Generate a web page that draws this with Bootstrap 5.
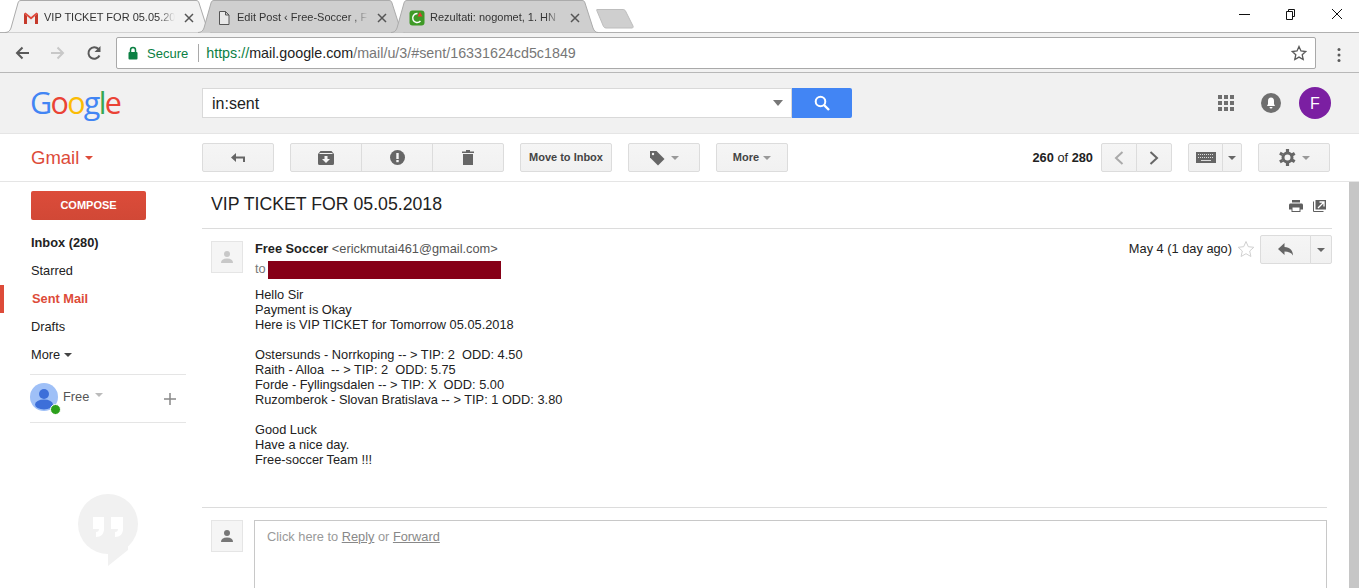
<!DOCTYPE html>
<html lang="en">
<head>
  <meta charset="UTF-8">
  <title>VIP TICKET FOR 05.05.2018</title>
  <link href="https://cdn.jsdelivr.net/npm/bootstrap@5.3.0/dist/css/bootstrap.min.css" rel="stylesheet">
  <style>
    html, body { height: 100%; }
    body { height: 588px; overflow: hidden; background: #fff; font-family: "Liberation Sans", Arial, sans-serif; font-size: 12.8px; color: #222; line-height: 15px; }

    /* chrome */
    .tabstrip { height: 33px; border-bottom: 1px solid #b0b0b0; padding-left: 5px; }
    .tabitem { position: relative; width: 207px; height: 33px; margin-right: -14px; flex: none; }
    .tabitem svg.tabshape { position: absolute; left: 0; top: 0; }
    .tabinner { position: relative; height: 32px; padding-top: 10px; font-size: 11px; color: #333; }
    .tabicon { width: 16px; height: 16px; flex: none; margin: 0 5px 0 18px; }
    .tabtitle { width: 131px; height: 15px; overflow: hidden; white-space: nowrap; -webkit-mask-image: linear-gradient(to right, #000 88%, transparent); mask-image: linear-gradient(to right, #000 88%, transparent); }
    .tabclose { margin-left: 6px; }
    .newtab { margin: 8px 0 0 12px; flex: none; }
    .winbtns { margin-left: auto; gap: 34px; padding: 8px 16px 0 0; height: 32px; }
    .toolbar { height: 40px; background: #f2f2f2; border-bottom: 1px solid #b8b8b8; padding-top: 4px; }
    .navicons { width: 116px; padding: 8px 0 0 14px; gap: 20px; height: 32px; }
    .omnibox { width: 1200px; height: 32px; background: #fff; border: 1px solid #a9a9a9; border-radius: 2px; font-size: 14.3px; padding: 0 8px 0 10px; }
    .secure { color: #0b8043; font-size: 13px; }
    .omnisep { width: 1px; height: 18px; background: #a9a9a9; margin: 0 7px 0 10px; }
    .urlhost { color: #222; }
    .urlrest { color: #777; }
    .urlscheme { color: #0b8043; }
    .menudots { padding: 0 0 0 21px; }

    /* gmail header */
    .gheader { height: 61px; background: #f1f1f1; border-bottom: 1px solid #e5e5e5; padding-left: 30px; }
    .glogo { width: 172px; margin-top: -3px; font-family: "Open Sans", "Liberation Sans", sans-serif; font-size: 30.5px; letter-spacing: -1.7px; line-height: 40px; }
    .searchbox { width: 590px; height: 30px; background: #fff; border: 1px solid #d9d9d9; font-size: 16px; padding: 0 0 0 9px; }
    .searchbtn { width: 60px; height: 30px; background: #4285f4; border-radius: 0 2px 2px 0; }
    .gright { margin-left: auto; padding-right: 28px; gap: 27px; }
    .avatarf { width: 32px; height: 32px; border-radius: 50%; background: #7b1fa2; color: #fff; font-size: 16px; margin-left: -9px; }

    /* action bar */
    .actionbar { height: 48px; border-bottom: 1px solid #e5e5e5; padding: 9px 0 0 31px; }
    .gmaillabel { width: 171px; height: 29px; color: #dd4b39; font-size: 18.5px; line-height: 29px; gap: 6px; }
    .tbtn { height: 29px; background: linear-gradient(#f5f5f5, #f1f1f1); border: 1px solid #dcdcdc; border-radius: 2px; color: #444; font-weight: bold; font-size: 11px; flex: none; }
    .tbtn-group > .tbtn { border-radius: 0; margin-left: -1px; }
    .tbtn-group > .tbtn:first-child { border-radius: 2px 0 0 2px; margin-left: 0; }
    .tbtn-group > .tbtn:last-child { border-radius: 0 2px 2px 0; }
    .tbtn-gap { gap: 6px; }
    .caretdown { width: 0; height: 0; border-left: 4px solid transparent; border-right: 4px solid transparent; border-top: 4px solid #999; display: inline-block; }
    .pager { margin: 0 8px 0 auto; line-height: 29px; color: #222; }

    /* sidebar */
    .pagebody { height: 406px; }
    .sidecol { width: 202px; flex: none; }
    .composebtn { display: block; width: 115px; height: 29px; margin: 9px 0 9px 31px; background: linear-gradient(#dc4c3a, #d14836); border-radius: 2px; color: #fff; font-weight: bold; font-size: 11px; line-height: 28px; text-align: center; }
    .sidelink { display: block; height: 28px; line-height: 28px; padding-left: 31px; color: #222; }
    .sidelink-on { color: #dd4b39; font-weight: bold; border-left: 4px solid #dd4b39; padding-left: 28px; }
    .sideuser { margin: 5px 16px 0 30px; height: 49px; border-top: 1px solid #e5e5e5; border-bottom: 1px solid #e5e5e5; padding-top: 8px; position: relative; }
    .onlinedot { position: absolute; left: 20px; top: 29px; width: 11px; height: 11px; border-radius: 50%; background: #2ca01c; border: 1px solid #fff; }
    .sidename { color: #555; padding: 6px 0 0 5px; gap: 6px; }
    .sideplus { margin: 10px 10px 0 auto; }
    .hangouts { padding: 71px 0 0 78px; }

    /* message */
    .mailcol { flex: 1 1 auto; min-width: 0; }
    .subjectrow { height: 47px; border-bottom: 1px solid #dcdcdc; margin-right: 17px; padding-left: 9px; font-size: 17.7px; line-height: 44px; color: #222; }
    .mailicons { margin-left: auto; gap: 10px; padding: 18px 6px 0 0; }
    .msgrow { padding: 6px 17px 0 9px; }
    .facebox { width: 32px; height: 32px; background: #f5f5f5; border: 1px solid #e5e5e5; flex: none; margin-top: 6px; }
    .msgmain { padding-left: 12px; min-width: 0; flex: 1 1 auto; }
    .msghead { height: 44px; }
    .sendername { font-weight: bold; color: #222; }
    .senderaddr { color: #555; }
    .torow { height: 18px; margin-top: 5px; }
    .tolabel { color: #777; padding-bottom: 3px; }
    .redacted { width: 233px; height: 18px; background: #860017; margin-left: 2px; }
    .msgdate { color: #222; margin-left: auto; padding-top: 6px; }
    .msgstar { margin: 5px 0 0 5px; }
    .mailtext { white-space: pre-wrap; color: #222; padding-top: 8px; height: 228px; }
    .divline { border-top: 1px solid #dcdcdc; margin-right: 22px; }
    .replyrow { padding: 12px 22px 0 9px; }
    .replybox { flex: 1 1 auto; height: 80px; margin-left: 11px; border: 1px solid #c8c8c8; border-bottom: 0; padding: 8px 12px; color: #999; }
    .replybox u { color: #888; }
    .fakescroll { width: 10px; flex: none; background: #c6c6c6; }
  </style>
</head>
<body>
  <!-- tab strip -->
  <div class="tabstrip d-flex">
    <div class="tabitem">
      <svg class="tabshape" width="207" height="33"><path d="M0 32.500C3 32.500 5 31 6 28L13 3C13.500 1.500 14 .5 16 .5H191C193 .5 193.500 1.500 194 3L202 28C203 31 205 32.500 207 32.500" fill="#f2f2f2" stroke="#ababab"/></svg>
      <div class="tabinner d-flex">
        <svg class="tabicon" viewBox="0 0 16 16"><path d="M2 3h12v11H2z" fill="#eee"/><path d="M1 3.500L2.500 2.500 8 7l5.500-4.500L15 3.500 8 9.500z" fill="#e0483a"/><path d="M1 3.500L4 6v8H1.500A.5.5 0 0 1 1 13.500z" fill="#c5392b"/><path d="M15 3.500L12 6v8h2.500a.5.5 0 0 0 .5-.5z" fill="#c5392b"/></svg>
        <div class="tabtitle">VIP TICKET FOR 05.05.20</div>
        <svg class="tabclose" width="16" height="16" viewBox="0 0 16 16"><path d="M4 4l8 8M12 4l-8 8" stroke="#555" stroke-width="1.500"/></svg>
      </div>
    </div>
    <div class="tabitem">
      <svg class="tabshape" width="207" height="33"><path d="M0 32.500C3 32.500 5 31 6 28L13 3C13.500 1.500 14 .5 16 .5H191C193 .5 193.500 1.500 194 3L202 28C203 31 205 32.500 207 32.500" fill="#cfcfcf" stroke="#ababab"/></svg>
      <div class="tabinner d-flex">
        <svg class="tabicon" viewBox="0 0 16 16"><path d="M3.500 1.500h6l3.500 3.500v9.500h-9.500zM9.500 1.500v3.500h3.500" fill="#e8e8e8" stroke="#555"/></svg>
        <div class="tabtitle">Edit Post ‹ Free-Soccer , F</div>
        <svg class="tabclose" width="16" height="16" viewBox="0 0 16 16"><path d="M4 4l8 8M12 4l-8 8" stroke="#555" stroke-width="1.500"/></svg>
      </div>
    </div>
    <div class="tabitem">
      <svg class="tabshape" width="207" height="33"><path d="M0 32.500C3 32.500 5 31 6 28L13 3C13.500 1.500 14 .5 16 .5H191C193 .5 193.500 1.500 194 3L202 28C203 31 205 32.500 207 32.500" fill="#cfcfcf" stroke="#ababab"/></svg>
      <div class="tabinner d-flex">
        <svg class="tabicon" viewBox="0 0 16 16"><rect x=".5" y=".5" width="15" height="15" rx="3" fill="#3f9a27"/><path d="M11.500 11A4.500 4.500 0 1 1 8.500 3.500" fill="none" stroke="#fff" stroke-width="1.500"/><path d="M8.500 6.500L11 2l2.500 4.500z" fill="#e53935"/></svg>
        <div class="tabtitle">Rezultati: nogomet, 1. HN</div>
        <svg class="tabclose" width="16" height="16" viewBox="0 0 16 16"><path d="M4 4l8 8M12 4l-8 8" stroke="#555" stroke-width="1.500"/></svg>
      </div>
    </div>
    <svg class="newtab" width="38" height="21" viewBox="0 0 38 21"><path d="M1 1.500H27C28 1.500 29 2 29.500 3L37 18C37.500 19 37 20 36 20H10C9 20 8 19.500 7.500 18.500L1 3C.5 2 .5 1.500 1 1.500z" fill="#cfcfcf" stroke="#bdbdbd"/></svg>
    <div class="winbtns d-flex align-items-start">
      <svg width="12" height="12" viewBox="0 0 12 12"><path d="M0 6.500h11" stroke="#111"/></svg>
      <svg width="12" height="12" viewBox="0 0 12 12"><path d="M1.500 3.500h6v8h-6zM3.500 3.500v-2h6v7h-2" fill="none" stroke="#111"/></svg>
      <svg width="12" height="12" viewBox="0 0 12 12"><path d="M1 1l10 10M11 1L1 11" stroke="#111"/></svg>
    </div>
  </div>

  <!-- address bar -->
  <div class="toolbar d-flex">
    <div class="navicons d-flex">
      <svg width="16" height="16" viewBox="0 0 16 16"><path d="M15 8H3M8.500 2.500L3 8l5.500 5.500" fill="none" stroke="#5a5a5a" stroke-width="2"/></svg>
      <svg width="16" height="16" viewBox="0 0 16 16"><path d="M1 8h12M7.500 2.500L13 8l-5.500 5.500" fill="none" stroke="#c8c8c8" stroke-width="2"/></svg>
      <svg width="16" height="16" viewBox="0 0 16 16"><path d="M13.500 10.500A5.800 5.800 0 1 1 12.500 4" fill="none" stroke="#5a5a5a" stroke-width="2"/><path d="M14.500 1v6h-6z" fill="#5a5a5a"/></svg>
    </div>
    <div class="omnibox d-flex align-items-center">
      <svg class="me-2" width="12" height="14" viewBox="0 0 12 14"><path d="M3.500 6V4a2.500 2.500 0 0 1 5 0v2" fill="none" stroke="#0b8043" stroke-width="1.500"/><rect x="1.500" y="6" width="9" height="7.500" rx="1" fill="#0b8043"/></svg>
      <span class="secure">Secure</span><span class="omnisep"></span><span><span class="urlscheme">https://</span><span class="urlhost">mail.google.com</span><span class="urlrest">/mail/u/3/#sent/16331624cd5c1849</span></span>
      <svg class="ms-auto" width="16" height="16" viewBox="0 0 16 16"><path d="M8 1.500l2 4.500 4.700.5-3.500 3.200 1 4.800L8 12.100l-4.200 2.400 1-4.800L1.300 6.500 6 6z" fill="none" stroke="#5a5a5a" stroke-width="1.300"/></svg>
    </div>
    <div class="menudots d-flex align-items-center">
      <svg width="4" height="18" viewBox="0 0 4 18"><circle cx="2" cy="3.500" r="1.500" fill="#5a5a5a"/><circle cx="2" cy="9" r="1.500" fill="#5a5a5a"/><circle cx="2" cy="14.500" r="1.500" fill="#5a5a5a"/></svg>
    </div>
  </div>

  <!-- gmail header -->
  <div class="gheader d-flex align-items-center">
    <div class="glogo"><span style="color:#4285f4">G</span><span style="color:#ea4335">o</span><span style="color:#fbbc05">o</span><span style="color:#4285f4">g</span><span style="color:#34a853">l</span><span style="color:#ea4335">e</span></div>
    <div class="searchbox d-flex align-items-center">
      <span>in:sent</span>
      <span class="caretdown ms-auto me-2" style="border-top-color:#777;border-left-width:5px;border-right-width:5px;border-top-width:6px"></span>
    </div>
    <div class="searchbtn d-flex align-items-center justify-content-center">
      <svg width="18" height="18" viewBox="0 0 18 18"><circle cx="7.500" cy="7.500" r="4.800" fill="none" stroke="#fff" stroke-width="2"/><path d="M11 11l5 5" stroke="#fff" stroke-width="2.400"/></svg>
    </div>
    <div class="gright d-flex align-items-center">
      <svg width="16" height="16" viewBox="0 0 16 16" fill="#6f6f6f"><rect width="4" height="4"/><rect x="6" width="4" height="4"/><rect x="12" width="4" height="4"/><rect y="6" width="4" height="4"/><rect x="6" y="6" width="4" height="4"/><rect x="12" y="6" width="4" height="4"/><rect y="12" width="4" height="4"/><rect x="6" y="12" width="4" height="4"/><rect x="12" y="12" width="4" height="4"/></svg>
      <svg width="20" height="20" viewBox="0 0 20 20"><circle cx="10" cy="10" r="10" fill="#6f6f6f"/><path d="M10 4.500c-2 0-3 1.500-3 3.500v3l-1 2h8l-1-2V8c0-2-1-3.500-3-3.500zM8.500 14h3a1.500 1.500 0 0 1-3 0z" fill="#fff"/></svg>
      <div class="avatarf d-flex align-items-center justify-content-center">F</div>
    </div>
  </div>

  <!-- action bar -->
  <div class="actionbar d-flex">
    <div class="gmaillabel d-flex align-items-center">Gmail <span class="caretdown" style="border-top-color:#dd4b39"></span></div>
    <div class="tbtn d-flex align-items-center justify-content-center" style="width:72px">
      <svg width="14" height="10" viewBox="0 0 14 10"><path d="M5 0v3.500h9V9h-2V5.500H5V9L0 4.500z" fill="#666"/></svg>
    </div>
    <div class="tbtn-group d-flex" style="margin-left:16px">
      <div class="tbtn d-flex align-items-center justify-content-center" style="width:72px"><svg width="16" height="14" viewBox="0 0 16 14"><path d="M2.500 0h11L16 3v9.500a1.500 1.500 0 0 1-1.500 1.500h-13A1.500 1.500 0 0 1 0 12.500V3z" fill="#666"/><path d="M6.500 5h3v3H12l-4 4-4-4h2.500z" fill="#f5f5f5"/><path d="M1.500 2.500h13" stroke="#f5f5f5"/></svg></div>
      <div class="tbtn d-flex align-items-center justify-content-center" style="width:72px"><svg width="15" height="15" viewBox="0 0 15 15"><circle cx="7.500" cy="7.500" r="7.500" fill="#666"/><rect x="6.300" y="3" width="2.400" height="6" fill="#f5f5f5"/><rect x="6.300" y="10" width="2.400" height="2.200" fill="#f5f5f5"/></svg></div>
      <div class="tbtn d-flex align-items-center justify-content-center" style="width:72px"><svg width="12" height="15" viewBox="0 0 12 15"><path d="M4 0h4v1.500h4V3H0V1.500h4zM1 4h10v11H1z" fill="#666"/></svg></div>
    </div>
    <div class="tbtn d-flex align-items-center justify-content-center" style="width:92px;margin-left:16px">Move to Inbox</div>
    <div class="tbtn tbtn-gap d-flex align-items-center justify-content-center" style="width:72px;margin-left:16px">
      <svg width="16" height="16" viewBox="0 0 16 16"><path d="M1 1h6.500L15.500 9 9 15.500 1 7.500z" fill="#666"/><circle cx="4" cy="4" r="1.200" fill="#f5f5f5"/></svg><span class="caretdown"></span>
    </div>
    <div class="tbtn d-flex align-items-center justify-content-center gap-1" style="width:72px;margin-left:16px">More <span class="caretdown"></span></div>
    <div class="pager"><b>260</b> of <b>280</b></div>
    <div class="tbtn-group d-flex">
      <div class="tbtn d-flex align-items-center justify-content-center" style="width:36px"><svg width="10" height="14" viewBox="0 0 10 14"><path d="M8.500 1L2 7l6.500 6" fill="none" stroke="#aaa" stroke-width="2"/></svg></div>
      <div class="tbtn d-flex align-items-center justify-content-center" style="width:36px"><svg width="10" height="14" viewBox="0 0 10 14"><path d="M1.500 1L8 7l-6.500 6" fill="none" stroke="#666" stroke-width="2"/></svg></div>
    </div>
    <div class="tbtn-group d-flex" style="margin-left:16px">
      <div class="tbtn d-flex align-items-center justify-content-center" style="width:35px"><svg width="20" height="11" viewBox="0 0 20 11"><rect width="20" height="11" fill="#666"/><path d="M2 2.500h16M2 5.500h16" stroke="#ddd" stroke-dasharray="1 1"/><path d="M5 8.500h10" stroke="#ddd"/></svg></div>
      <div class="tbtn d-flex align-items-center justify-content-center" style="width:20px"><span class="caretdown" style="border-top-color:#666"></span></div>
    </div>
    <div class="tbtn tbtn-gap d-flex align-items-center justify-content-center" style="width:72px;margin:0 29px 0 16px">
      <svg width="17" height="17" viewBox="0 0 17 17"><g stroke="#666" stroke-width="3.200" stroke-dasharray="3 11 3"><path d="M8.500 0v17"/><path d="M.9 4.200l15.200 8.600"/><path d="M.9 12.800l15.200-8.600"/></g><circle cx="8.500" cy="8.500" r="4.500" fill="none" stroke="#666" stroke-width="3"/></svg><span class="caretdown"></span>
    </div>
  </div>

  <div class="pagebody d-flex">
    <!-- sidebar -->
    <div class="sidecol">
      <a class="composebtn text-decoration-none" href="#">COMPOSE</a>
      <a class="sidelink text-decoration-none fw-bold" href="#">Inbox (280)</a>
      <a class="sidelink text-decoration-none" href="#">Starred</a>
      <a class="sidelink sidelink-on text-decoration-none" href="#">Sent Mail</a>
      <a class="sidelink text-decoration-none" href="#">Drafts</a>
      <a class="sidelink text-decoration-none d-flex align-items-center gap-1" href="#">More <span class="caretdown" style="border-top-color:#444"></span></a>
      <div class="sideuser d-flex">
        <svg width="28" height="28" viewBox="0 0 28 28"><circle cx="14" cy="14" r="14" fill="#9fc0f7"/><circle cx="14" cy="11" r="5" fill="#3d6fd9"/><ellipse cx="14" cy="21.500" rx="9" ry="5" fill="#3d6fd9"/></svg>
        <span class="onlinedot"></span>
        <span class="sidename d-flex align-items-start">Free <span class="caretdown mt-1" style="border-top-color:#bbb"></span></span>
        <svg class="sideplus" width="12" height="12" viewBox="0 0 12 12"><path d="M6 0v12M0 6h12" stroke="#888" stroke-width="1.500"/></svg>
      </div>
      <div class="hangouts">
        <svg width="60" height="72" viewBox="0 0 60 72"><circle cx="30" cy="30" r="30" fill="#f1f1f1"/><path d="M30 50v22l20-16v-8z" fill="#f1f1f1"/><path d="M15 23h11v12c0 5-3 8-8 8v-5c2 0 3-1 3-3h-6zM33 23h12v12c0 5-3 8-8 8v-5c2 0 3-1 3-3h-7z" fill="#fff"/></svg>
      </div>
    </div>

    <!-- message -->
    <div class="mailcol">
      <div class="subjectrow d-flex">
        <span>VIP TICKET FOR 05.05.2018</span>
        <div class="mailicons d-flex align-items-start">
          <svg width="14" height="12" viewBox="0 0 14 12"><path d="M3 0h8v2.500H3zM1.500 3.500h11c.8 0 1.500.7 1.500 1.500v4.500h-2.500V12h-9V9.500H0V5c0-.8.7-1.500 1.500-1.500z" fill="#5f5f5f"/><rect x="3.500" y="7.500" width="7" height="3.500" fill="#fff"/></svg>
          <svg width="13" height="12" viewBox="0 0 13 12"><path d="M.5 1.500v10h10" fill="none" stroke="#5f5f5f"/><rect x="2.500" width="10.500" height="9.500" fill="#5f5f5f"/><path d="M6.500 2h4.500v4.500M11 2L5 8" fill="none" stroke="#fff" stroke-width="1.300"/></svg>
        </div>
      </div>
      <div class="msgrow d-flex">
        <div class="facebox d-flex align-items-center justify-content-center">
          <svg width="14" height="14" viewBox="0 0 14 14"><circle cx="7" cy="4" r="3" fill="#c8c8c8"/><path d="M1 13c0-3 2-4.500 6-4.500s6 1.500 6 4.500z" fill="#c8c8c8"/></svg>
        </div>
        <div class="msgmain">
          <div class="msghead d-flex">
            <div style="padding-top:6px">
              <div><span class="sendername">Free Soccer</span> <span class="senderaddr">&lt;erickmutai461@gmail.com&gt;</span></div>
              <div class="torow d-flex align-items-center"><span class="tolabel">to</span><span class="redacted"></span></div>
            </div>
            <div class="msgdate">May 4 (1 day ago)</div>
            <svg class="msgstar" width="18" height="18" viewBox="0 0 18 18"><path d="M9 1.500l2.300 5.200 5.500.6-4.100 3.700 1.200 5.500L9 13.700l-4.900 2.800 1.200-5.500L1.200 7.300l5.500-.6z" fill="none" stroke="#d0d0d0"/></svg>
            <div class="tbtn-group d-flex" style="margin-left:5px">
              <div class="tbtn d-flex align-items-center justify-content-center" style="width:51px"><svg width="16" height="13" viewBox="0 0 16 13"><path d="M6.500 0L0 6l6.500 6V8.500c4 0 6.500 1 8.500 4 0-5-3-8-8.500-8.500z" fill="#666"/></svg></div>
              <div class="tbtn d-flex align-items-center justify-content-center" style="width:22px"><span class="caretdown" style="border-top-color:#666"></span></div>
            </div>
          </div>
          <div class="mailtext">Hello Sir
Payment is Okay
Here is VIP TICKET for Tomorrow 05.05.2018

Ostersunds - Norrkoping -- &gt; TIP: 2  ODD: 4.50
Raith - Alloa  -- &gt; TIP: 2  ODD: 5.75
Forde - Fyllingsdalen -- &gt; TIP: X  ODD: 5.00
Ruzomberok - Slovan Bratislava -- &gt; TIP: 1 ODD: 3.80

Good Luck
Have a nice day.
Free-soccer Team !!!</div>
        </div>
      </div>
      <div class="divline"></div>
      <div class="replyrow d-flex">
        <div class="facebox d-flex align-items-center justify-content-center mt-0">
          <svg width="14" height="14" viewBox="0 0 14 14"><circle cx="7" cy="4" r="3" fill="#777"/><path d="M1 13c0-3 2-4.500 6-4.500s6 1.500 6 4.500z" fill="#777"/></svg>
        </div>
        <div class="replybox">Click here to <u>Reply</u> or <u>Forward</u></div>
      </div>
    </div>
    <div class="fakescroll"></div>
  </div>

  <script src="https://cdn.jsdelivr.net/npm/bootstrap@5.3.0/dist/js/bootstrap.bundle.min.js"></script>
</body>
</html>
